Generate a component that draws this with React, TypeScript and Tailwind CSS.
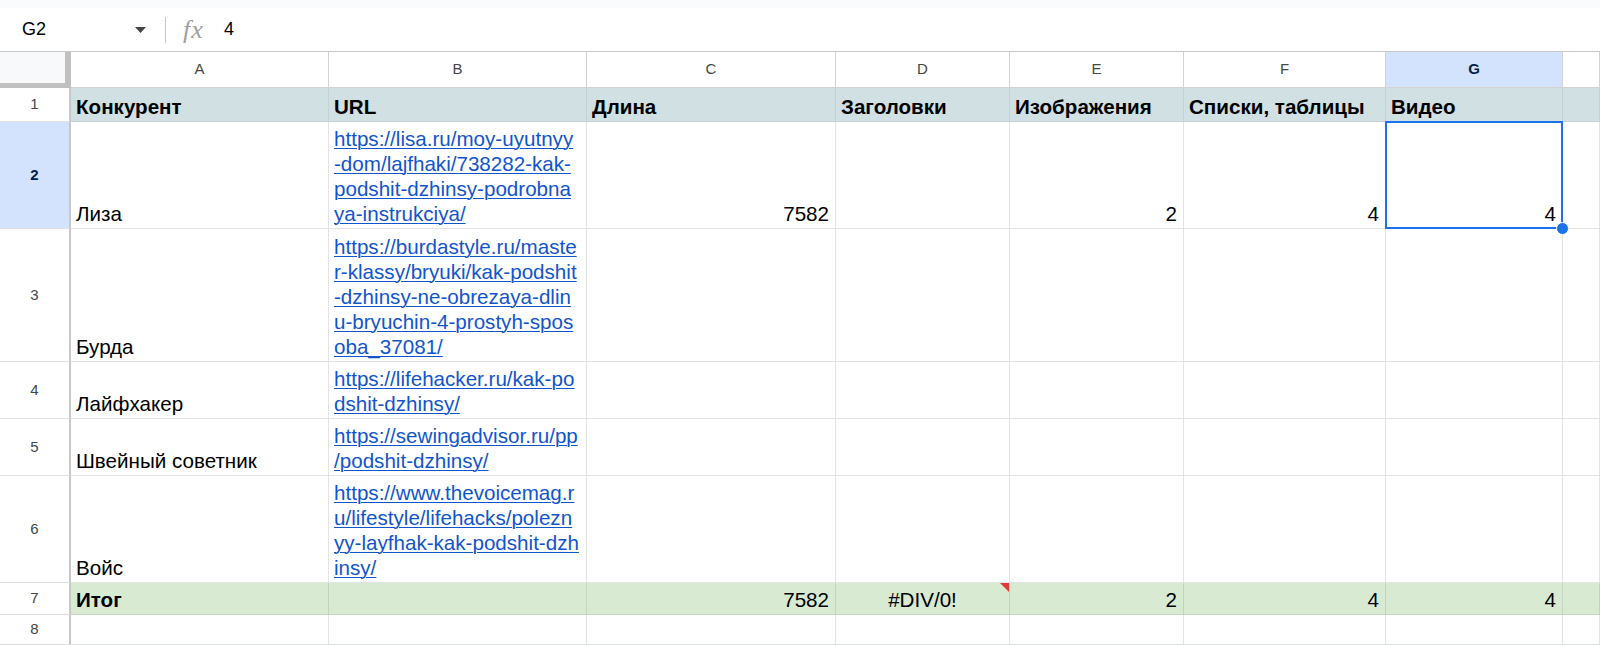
import React from 'react';

// Google Sheets-like grid: competitors and their article metrics

const FONT = "font-['Liberation_Sans',Arial,sans-serif]";

type Align = 'left' | 'right' | 'center';

function Cell({
  children,
  align = 'left',
  tone = 'plain',
  bold = false,
  extra,
}: {
  children?: React.ReactNode;
  align?: Align;
  tone?: 'plain' | 'head' | 'total';
  bold?: boolean;
  extra?: React.ReactNode;
}) {
  const toneCls =
    tone === 'head'
      ? 'bg-[#d0e0e3] border-[#c3d2d5]'
      : tone === 'total'
        ? 'bg-[#d9ead3] border-[#c3d4bd]'
        : 'bg-white border-[#e2e3e3]';
  const alignCls =
    align === 'right' ? 'items-end pr-[6px]' : align === 'center' ? 'items-center' : 'items-start pl-[5px]';
  return (
    <div
      className={`relative flex flex-col justify-end border-r border-b pb-[2px] text-[20.6px] leading-[25px] text-black whitespace-nowrap ${toneCls} ${alignCls} ${bold ? 'font-bold' : ''}`}
    >
      {children}
      {extra}
    </div>
  );
}

function RowHead({ n, active = false }: { n: number; active?: boolean }) {
  return (
    <div
      className={`flex items-center justify-center border-b border-r-2 border-b-[#e0e0e0] border-r-[#c7c7c7] text-[15px] ${
        active ? 'bg-[#d3e3fd] font-bold text-[#041e49]' : 'bg-white text-[#444746]'
      }`}
    >
      {n}
    </div>
  );
}

function ColHead({ label, active = false }: { label: string; active?: boolean }) {
  return (
    <div
      className={`flex items-center justify-center border-r border-b border-[#d3d3d3] text-[15px] ${
        active ? 'bg-[#d3e3fd] font-bold text-[#041e49]' : 'bg-white text-[#444746]'
      }`}
    >
      {label}
    </div>
  );
}

function Link({ lines }: { lines: string[] }) {
  return (
    <a className="text-[#1155cc] underline underline-offset-[2px] decoration-[1px]">
      {lines.map((l, i) => (
        <span key={i} className="block">
          {l}
        </span>
      ))}
    </a>
  );
}

const competitors: { name: string; url: string[] }[] = [
  {
    name: 'Лиза',
    url: ['https://lisa.ru/moy-uyutnyy', '-dom/lajfhaki/738282-kak-', 'podshit-dzhinsy-podrobna', 'ya-instrukciya/'],
  },
  {
    name: 'Бурда',
    url: [
      'https://burdastyle.ru/maste',
      'r-klassy/bryuki/kak-podshit',
      '-dzhinsy-ne-obrezaya-dlin',
      'u-bryuchin-4-prostyh-spos',
      'oba_37081/',
    ],
  },
  { name: 'Лайфхакер', url: ['https://lifehacker.ru/kak-po', 'dshit-dzhinsy/'] },
  { name: 'Швейный советник', url: ['https://sewingadvisor.ru/pp', '/podshit-dzhinsy/'] },
  {
    name: 'Войс',
    url: ['https://www.thevoicemag.r', 'u/lifestyle/lifehacks/polezn', 'yy-layfhak-kak-podshit-dzh', 'insy/'],
  },
];

const headers = ['Конкурент', 'URL', 'Длина', 'Заголовки', 'Изображения', 'Списки, таблицы', 'Видео', ''];

function Selection() {
  return (
    <div className="pointer-events-none absolute -top-px -left-px -right-px -bottom-px z-10 border-2 border-[#1a73e8]">
      <div className="absolute -right-[8px] -bottom-[8px] h-[13px] w-[13px] rounded-full border border-white bg-[#1a73e8]" />
    </div>
  );
}

export default function App() {
  return (
    <div className={`flex h-[645px] w-[1600px] flex-col overflow-hidden bg-white ${FONT}`}>
      {/* top strip */}
      <div className="h-[8px] bg-[#f9fbfd]" />

      {/* formula bar */}
      <div className="flex h-[44px] items-center border-b border-[#c7c7c7] bg-white text-[17px] text-black">
        <span className="ml-[22px] w-[113px] text-[18px]">G2</span>
        <svg width="11" height="6" viewBox="0 0 11 6" className="mt-[1px]">
          <path d="M0 0h11L5.5 6z" fill="#444746" />
        </svg>
        <div className="ml-[19px] h-[26px] w-px bg-[#c7c7c7]" />
        <span className="ml-[17px] w-[24px] font-['Liberation_Serif',serif] text-[26px] leading-none italic tracking-[1px] text-[#a0a0a0]">
          fx
        </span>
        <span className="ml-[17px] text-[18px]">4</span>
      </div>

      {/* grid */}
      <div className="grid grid-cols-[71px_258px_258px_249px_174px_174px_202px_177px_1fr] grid-rows-[36px_34px_107px_133px_57px_57px_107px_32px_30px]">
        {/* column letters */}
        <div className="border-r-[6px] border-b-[5px] border-[#c0c0c0] bg-[#f8f9fa]" />
        {['A', 'B', 'C', 'D', 'E', 'F', 'G', ''].map((c) => (
          <ColHead key={c || 'H'} label={c} active={c === 'G'} />
        ))}

        {/* row 1 */}
        <RowHead n={1} />
        {headers.map((h, i) => (
          <Cell key={i} tone="head" bold>
            {h}
          </Cell>
        ))}

        {/* rows 2-6 */}
        {competitors.map((c, i) => {
          const first = i === 0;
          return (
            <React.Fragment key={c.name}>
              <RowHead n={i + 2} active={first} />
              <Cell>{c.name}</Cell>
              <Cell>
                <Link lines={c.url} />
              </Cell>
              <Cell align="right">{first ? '7582' : ''}</Cell>
              <Cell />
              <Cell align="right">{first ? '2' : ''}</Cell>
              <Cell align="right">{first ? '4' : ''}</Cell>
              <Cell align="right" extra={first ? <Selection /> : null}>
                {first ? '4' : ''}
              </Cell>
              <Cell />
            </React.Fragment>
          );
        })}

        {/* row 7 totals */}
        <RowHead n={7} />
        <Cell tone="total" bold>
          Итог
        </Cell>
        <Cell tone="total" />
        <Cell tone="total" align="right">
          7582
        </Cell>
        <Cell
          tone="total"
          align="center"
          extra={
            <div className="absolute top-0 right-0 h-0 w-0 border-t-[9px] border-l-[9px] border-t-[#e53935] border-l-transparent" />
          }
        >
          #DIV/0!
        </Cell>
        <Cell tone="total" align="right">
          2
        </Cell>
        <Cell tone="total" align="right">
          4
        </Cell>
        <Cell tone="total" align="right">
          4
        </Cell>
        <Cell tone="total" />

        {/* row 8 */}
        <RowHead n={8} />
        {Array.from({ length: 8 }).map((_, i) => (
          <Cell key={i} />
        ))}
      </div>
    </div>
  );
}
